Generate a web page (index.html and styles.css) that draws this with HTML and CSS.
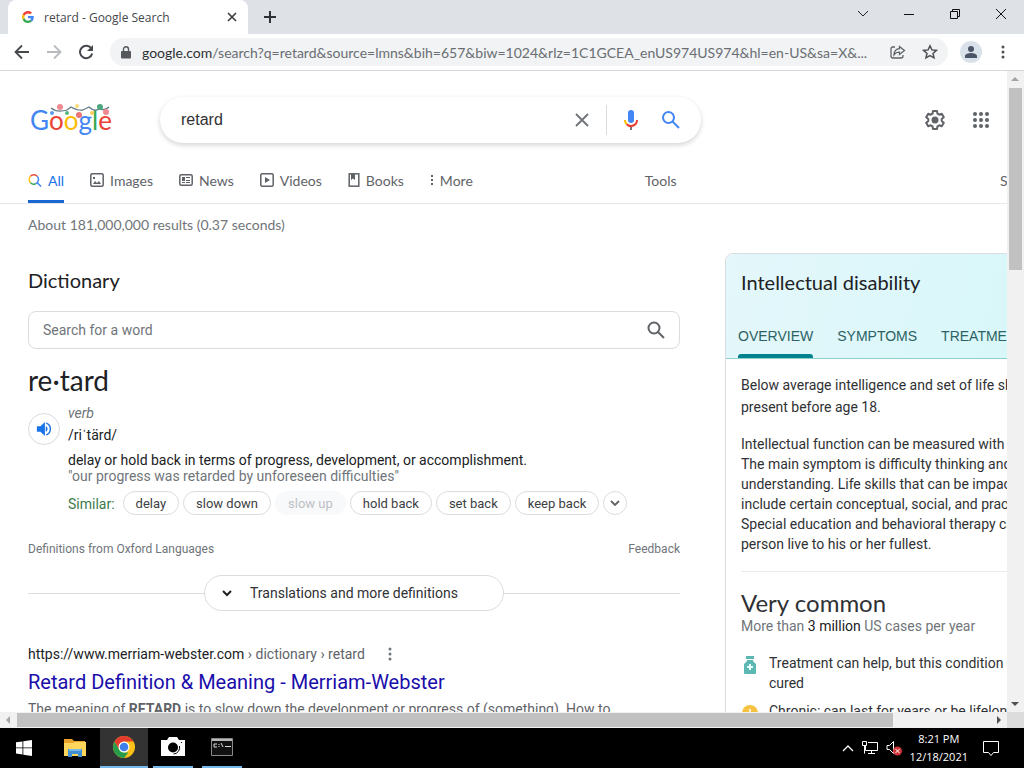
FILE: index.html
```html
<!DOCTYPE html>
<html lang="en">
<head>
    <meta charset="UTF-8">
    <meta name="viewport" content="width=device-width, initial-scale=1.0">
    <title>retard - Google Search</title>
    <link rel="stylesheet" href="styles.css">
</head>
<body>
    <!-- Tab strip -->
    <div class="tab-strip">
        <div class="tab">
            <svg width="12" height="12" viewBox="0 0 48 48"><path fill="#ea4335" d="M24 9.500c3.500 0 6.700 1.200 9.200 3.600l6.900-6.900C35.900 2.400 30.500 0 24 0 14.600 0 6.500 5.400 2.600 13.200l8 6.200C12.400 13.700 17.700 9.500 24 9.500z"/><path fill="#4285f4" d="M47 24.600c0-1.600-.2-3.100-.4-4.600H24v9h12.900c-.6 3-2.200 5.500-4.700 7.200l7.700 6C44.400 38 47 31.800 47 24.600z"/><path fill="#fbbc05" d="M10.500 28.600A14.500 14.500 0 0 1 10.500 19.400l-8-6.200a24 24 0 0 0 0 21.600z"/><path fill="#34a853" d="M24 48c6.500 0 11.900-2.100 15.900-5.800l-7.700-6c-2.200 1.500-4.900 2.300-8.200 2.300-6.300 0-11.600-4.200-13.500-9.900l-8 6.200C6.500 42.600 14.600 48 24 48z"/></svg>
            <span class="tab-title">retard - Google Search</span>
            <button class="icon-button" aria-label="Close tab"><svg width="10" height="10" viewBox="0 0 10 10" fill="none" stroke="#3c4043" stroke-width="1.700"><path d="M1 1l8 8M9 1L1 9"/></svg></button>
        </div>
        <button class="icon-button new-tab" aria-label="New tab"><svg width="12" height="12" viewBox="0 0 12 12" stroke="#303134" stroke-width="2"><path d="M6 0v12M0 6h12"/></svg></button>
        <div class="window-controls">
            <button class="icon-button" aria-label="Search tabs"><svg width="12" height="12" viewBox="0 0 12 12" fill="none" stroke="#222"><path d="M1 3l5 5 5-5"/></svg></button>
            <button class="icon-button" aria-label="Minimize"><svg width="12" height="12" viewBox="0 0 12 12" stroke="#111"><path d="M1 6.500h10"/></svg></button>
            <button class="icon-button" aria-label="Restore"><svg width="12" height="12" viewBox="0 0 12 12" fill="none" stroke="#111"><path d="M1.500 3.500h7v7h-7zM3.500 3.500v-2h7v7h-2"/></svg></button>
            <button class="icon-button" aria-label="Close"><svg width="12" height="12" viewBox="0 0 12 12" stroke="#111"><path d="M1 1l10 10M11 1L1 11"/></svg></button>
        </div>
    </div>

    <!-- Toolbar -->
    <div class="toolbar">
        <button class="icon-button" aria-label="Back"><svg width="16" height="16" viewBox="0 0 16 16" fill="none" stroke="#45484c" stroke-width="1.800"><path d="M15 8H2M8 1.500L1.500 8 8 14.500"/></svg></button>
        <button class="icon-button" aria-label="Forward"><svg width="16" height="16" viewBox="0 0 16 16" fill="none" stroke="#b8babd" stroke-width="1.800"><path d="M1 8h13M8 1.500L14.500 8 8 14.500"/></svg></button>
        <button class="icon-button" aria-label="Reload"><svg width="16" height="16" viewBox="0 0 16 16"><path fill="none" stroke="#45484c" stroke-width="2" d="M13.500 4.800A6.200 6.200 0 1 0 14.200 9.500"/><path fill="#45484c" d="M15 1v6H9z"/></svg></button>
        <div class="address-bar">
            <svg width="10" height="13" viewBox="0 0 10 13"><path fill="#55585d" d="M1 5h8a1 1 0 0 1 1 1v5.500a1 1 0 0 1-1 1H1a1 1 0 0 1-1-1V6a1 1 0 0 1 1-1z"/><path fill="none" stroke="#55585d" stroke-width="1.400" d="M2.500 6V3.200a2.500 2.500 0 0 1 5 0V6"/></svg>
            <span class="url"><span class="domain">google.com</span>/search?q=retard&amp;source=lmns&amp;bih=657&amp;biw=1024&amp;rlz=1C1GCEA_enUS974US974&amp;hl=en-US&amp;sa=X&amp;...</span>
            <button class="icon-button" aria-label="Share"><svg width="16" height="16" viewBox="0 0 16 16" fill="none" stroke="#5f6368" stroke-width="1.300"><path d="M5 3H3a2 2 0 0 0-2 2v7a2 2 0 0 0 2 2h8a2 2 0 0 0 2-2v-1M9.500 2.500L14.500 6.500l-5 4V8.200C7 8 5.500 8.700 4 10.800 4.200 7.500 6 5 9.500 4.700z"/></svg></button>
            <button class="icon-button" aria-label="Bookmark"><svg width="16" height="16" viewBox="0 0 16 16" fill="none" stroke="#4d5156" stroke-width="1.500"><path d="M8 1.800l1.900 4.100 4.500.5-3.400 3 1 4.400L8 11.500l-4 2.300 1-4.400-3.400-3 4.500-.5z"/></svg></button>
        </div>
        <button class="icon-button profile" aria-label="Profile"><svg width="14" height="14" viewBox="0 0 14 14" fill="#4a5568"><circle cx="7" cy="4" r="3"/><path d="M1 13v-2c0-2 3.500-3 6-3s6 1 6 3v2z"/></svg></button>
        <button class="icon-button menu" aria-label="Menu"><svg width="4" height="14" viewBox="0 0 4 14" fill="#4d5156"><circle cx="2" cy="2" r="1.500"/><circle cx="2" cy="7" r="1.500"/><circle cx="2" cy="12" r="1.500"/></svg></button>
    </div>

    <div class="browser-view">
        <div class="page">
            <header class="search-header">
                <a href="#" class="logo" aria-label="Google">
                    <span class="blue">G</span><span class="red">o</span><span class="yellow">o</span><span class="blue">g</span><span class="green">l</span><span class="red">e</span>
                    <svg class="logo-lights" width="60" height="14" viewBox="0 0 60 14"><path fill="none" stroke="#667b86" stroke-width="1.300" d="M1 4q6 5 16 2l4-3q7 4 12 3l6-3q5 5 10 2 6 2 10-2"/><circle cx="2" cy="9" r="2" fill="#5b9bea"/><circle cx="10" cy="3" r="3" fill="#ee8a91"/><circle cx="17" cy="9" r="2" fill="#57b77a"/><circle cx="27" cy="2" r="2" fill="#f8dc78"/><circle cx="29" cy="11" r="3" fill="#eb7474"/><circle cx="42" cy="9" r="2" fill="#f7ce5b"/><circle cx="50" cy="3" r="3" fill="#4aa780"/><circle cx="56" cy="8" r="3" fill="#ed8992"/></svg>
                </a>
                <form class="search-box">
                    <input type="text" value="retard" aria-label="Search">
                    <button type="button" class="icon-button clear" aria-label="Clear"><svg width="14" height="14" viewBox="0 0 14 14" stroke="#70757a" stroke-width="1.900"><path d="M1 1l12 12M13 1L1 13"/></svg></button>
                    <button type="button" class="icon-button mic" aria-label="Search by voice"><svg width="24" height="24" viewBox="0 0 24 24"><path fill="#4285f4" d="M12 15a3 3 0 0 0 3-3V5a3 3 0 0 0-6 0v7a3 3 0 0 0 3 3z"/><path fill="#777" d="M11 18h2v4h-2z"/><path fill="#fbbc04" d="M7 12H5c0 2 .8 3.700 2 5l1.500-1.500C7.500 14.600 7 13.400 7 12z"/><path fill="#ea4335" d="M17 12a5 5 0 0 1-8.500 3.500L7 17a7 7 0 0 0 12-5z"/></svg></button>
                    <button type="button" class="icon-button" aria-label="Google Search"><svg width="20" height="20" viewBox="0 0 20 20" fill="none" stroke="#4285f4" stroke-width="2"><circle cx="7.500" cy="7.500" r="5.500"/><path d="M11.500 11.500l6.500 6.500"/></svg></button>
                </form>
                <div class="header-tools">
                    <button class="icon-button" aria-label="Quick settings"><svg width="24" height="24" viewBox="0 0 24 24"><path fill="none" stroke="#5f6368" stroke-width="2" stroke-linejoin="round" d="M10 3h4l.5 2.700 1.700 1 2.600-1 2 3.500-2.100 1.800v2l2.100 1.800-2 3.500-2.600-1-1.700 1L14 21h-4l-.5-2.700-1.700-1-2.600 1-2-3.500L5.300 13v-2L3.200 9.200l2-3.500 2.600 1 1.700-1z"/><circle cx="12" cy="12" r="3.500" fill="#5f6368"/></svg></button>
                    <button class="icon-button" aria-label="Google apps"><svg width="16" height="16" viewBox="0 0 16 16" fill="#5f6368"><circle cx="2" cy="2" r="2"/><circle cx="8" cy="2" r="2"/><circle cx="14" cy="2" r="2"/><circle cx="2" cy="8" r="2"/><circle cx="8" cy="8" r="2"/><circle cx="14" cy="8" r="2"/><circle cx="2" cy="14" r="2"/><circle cx="8" cy="14" r="2"/><circle cx="14" cy="14" r="2"/></svg></button>
                </div>
            </header>

            <nav class="search-nav">
                <div class="nav-links">
                    <a href="#" class="active"><svg width="14" height="14" viewBox="0 0 15 15" fill="none" stroke-width="1.600"><path stroke="#ea4335" d="M2.700 3.500a5 5 0 0 1 7.200 0"/><path stroke="#fbbc04" d="M2.700 3.500a5 5 0 0 0 0 7"/><path stroke="#34a853" d="M2.700 10.500a5 5 0 0 0 5.500 1"/><path stroke="#4285f4" d="M9.900 3.500a5 5 0 0 1-1.700 8M10 10.500l4 4"/></svg>All</a>
                    <a href="#"><svg width="14" height="14" viewBox="0 0 14 14"><rect x=".8" y=".8" width="12.400" height="12.400" rx="1.500" fill="none" stroke="#5f6368" stroke-width="1.500"/><path fill="#5f6368" d="M3 11l2-3 2 2 2-2 2 3zM3 4h2v2H3z"/></svg>Images</a>
                    <a href="#"><svg width="14" height="14" viewBox="0 0 14 14"><rect x=".8" y="1.800" width="12.400" height="10.400" rx="1.500" fill="none" stroke="#5f6368" stroke-width="1.500"/><path fill="#5f6368" d="M3 4h3v4H3zM7 4h4v1H7zM7 7h4v1H7zM3 9h3v1H3zM7 9h4v1H7z"/></svg>News</a>
                    <a href="#"><svg width="14" height="14" viewBox="0 0 14 14"><rect x=".8" y=".8" width="12.400" height="12.400" rx="1.500" fill="none" stroke="#5f6368" stroke-width="1.500"/><path fill="#5f6368" d="M5 4l5 3-5 3z"/></svg>Videos</a>
                    <a href="#"><svg width="12" height="14" viewBox="0 0 12 14"><rect x="1.200" y=".8" width="9.600" height="12.400" fill="none" stroke="#5f6368" stroke-width="1.500"/><path fill="#5f6368" d="M3 1h4v6L5 5.500 3 7z"/></svg>Books</a>
                    <a href="#" class="more"><svg width="4" height="12" viewBox="0 0 4 12" fill="#5f6368"><path d="M1 1h2v2H1zM1 5h2v2H1zM1 9h2v2H1z"/></svg>More</a>
                    <a href="#" class="tools">Tools</a>
                </div>
                <a href="#">SafeSearch</a>
            </nav>

            <div class="content">
                <main class="results">
                    <p class="stats">About 181,000,000 results (0.37 seconds)</p>
                    <section class="dictionary">
                        <h2>Dictionary</h2>
                        <form class="word-search">
                            <input type="text" placeholder="Search for a word" aria-label="Search for a word">
                            <button type="button" class="icon-button" aria-label="Look up"><svg width="18" height="18" viewBox="0 0 18 18" fill="none" stroke="#5f6368" stroke-width="2"><circle cx="7" cy="7" r="5.500"/><path d="M11 11l6 6"/></svg></button>
                        </form>
                        <h3 class="word">re·tard</h3>
                        <div class="entry">
                            <button class="icon-button speaker" aria-label="Listen"><svg width="16" height="16" viewBox="0 0 18 18"><path fill="#1a73e8" d="M1 6v6h4l5 5V1L5 6z"/><path fill="#1a73e8" d="M11 5.500a4 4 0 0 1 0 7z"/><path fill="none" stroke="#1a73e8" stroke-width="1.600" d="M11.500 2.400a7 7 0 0 1 0 13.200"/></svg></button>
                            <div class="pronunciation">
                                <p class="part">verb</p>
                                <p>/riˈtärd/</p>
                            </div>
                        </div>
                        <div class="definition">
                            <p>delay or hold back in terms of progress, development, or accomplishment.</p>
                            <p class="example">"our progress was retarded by unforeseen difficulties"</p>
                            <div class="similar">
                                <span class="similar-label">Similar:</span>
                                <button class="chip">delay</button>
                                <button class="chip">slow down</button>
                                <button class="chip" disabled>slow up</button>
                                <button class="chip">hold back</button>
                                <button class="chip">set back</button>
                                <button class="chip">keep back</button>
                                <button class="chip round" aria-label="More synonyms"><svg width="10" height="6" viewBox="0 0 10 6" fill="none" stroke="#5f6368" stroke-width="1.800"><path d="M1 1l4 4 4-4"/></svg></button>
                            </div>
                        </div>
                        <div class="source">
                            <a href="#">Definitions from Oxford Languages</a>
                            <a href="#">Feedback</a>
                        </div>
                        <div class="expand">
                            <button><svg width="10" height="7" viewBox="0 0 10 7" fill="none" stroke="#202124" stroke-width="2"><path d="M1 1l4 4 4-4"/></svg>Translations and more definitions</button>
                        </div>
                    </section>
                    <article class="result">
                        <div class="cite"><span><span class="host">https://www.merriam-webster.com</span> › dictionary › retard</span>
                            <button class="icon-button" aria-label="About this result"><svg width="4" height="14" viewBox="0 0 4 14" fill="#70757a"><circle cx="2" cy="2" r="1.500"/><circle cx="2" cy="7" r="1.500"/><circle cx="2" cy="12" r="1.500"/></svg></button>
                        </div>
                        <h3><a href="#">Retard Definition &amp; Meaning - Merriam-Webster</a></h3>
                        <p>The meaning of <b>RETARD</b> is to slow down the development or progress of (something). How to</p>
                    </article>
                </main>

                <aside class="health-panel">
                    <div class="panel-head">
                        <h2>Intellectual disability</h2>
                        <div class="panel-tabs">
                            <a href="#" class="selected">OVERVIEW</a>
                            <a href="#">SYMPTOMS</a>
                            <a href="#">TREATMENTS</a>
                        </div>
                    </div>
                    <div class="panel-body">
                        <p class="summary">Below average intelligence and set of life skills<br>present before age 18.</p>
                        <p class="details">Intellectual function can be measured with a test.<br>The main symptom is difficulty thinking and<br>understanding. Life skills that can be impacted<br>include certain conceptual, social, and practical skills.<br>Special education and behavioral therapy can help a<br>person live to his or her fullest.</p>
                        <h3>Very common</h3>
                        <p class="cases">More than <span>3 million</span> US cases per year</p>
                        <ul>
                            <li><svg width="12" height="18" viewBox="0 0 12 18"><path fill="#5cb8b2" d="M2 0h8v3H2zM3 4h6v1l3 3v9a1 1 0 0 1-1 1H1a1 1 0 0 1-1-1V8l3-3z"/><path fill="#e6fffc" d="M5 8h2v2h2v2H7v2H5v-2H3v-2h2z"/></svg><span>Treatment can help, but this condition can't be<br>cured</span></li>
                            <li><svg width="16" height="18" viewBox="0 0 16 18"><circle cx="8" cy="9" r="8" fill="#f5c242"/><path fill="none" stroke="#fff" stroke-width="1.500" d="M8 5v4l3 2"/></svg><span>Chronic: can last for years or be lifelong</span></li>
                        </ul>
                    </div>
                </aside>
            </div>
        </div>

        <div class="scrollbar vertical">
            <svg width="16" height="16" viewBox="0 0 16 16"><path fill="#a3a3a3" d="M4 10l4-4 4 4z"/></svg>
            <div class="track"><div class="thumb"></div></div>
            <svg width="16" height="16" viewBox="0 0 16 16"><path fill="#505050" d="M4 6l4 4 4-4z"/></svg>
        </div>
        <div class="scrollbar horizontal">
            <svg width="16" height="16" viewBox="0 0 16 16"><path fill="#a3a3a3" d="M10 4L6 8l4 4z"/></svg>
            <div class="track"><div class="thumb"></div></div>
            <svg width="16" height="16" viewBox="0 0 16 16"><path fill="#505050" d="M6 4l4 4-4 4z"/></svg>
        </div>
    </div>

    <!-- Windows taskbar -->
    <footer class="taskbar">
        <button class="task start" aria-label="Start"><svg width="16" height="16" viewBox="0 0 16 16" fill="#fff"><path d="M0 2.300L6.500 1.400v6.100H0zM7.300 1.300L16 0v7.500H7.300zM0 8.300h6.500v6.100L0 13.600zM7.300 8.300H16V16l-8.700-1.300z"/></svg></button>
        <button class="task" aria-label="File Explorer"><svg width="22" height="18" viewBox="0 0 22 18"><path fill="#e7a32e" d="M0 0h8l2 2h11v4H0z"/><path fill="#ffd65c" d="M0 4h9l2-1h11v14H0z"/><path fill="#3f8fd2" d="M4 10h14v8h-4v-3H8v3H4z"/><path fill="#79b9e8" d="M5 10h12v2H5z"/></svg></button>
        <button class="task current" aria-label="Google Chrome"><svg width="24" height="24" viewBox="0 0 24 24"><circle cx="12" cy="12" r="11" fill="#fbc116"/><path fill="#e33b2e" d="M2.500 6.500a11 11 0 0 1 19 0H12l-4.800 8z"/><path fill="#269b4a" d="M2.500 6.500L7.300 14.700 12 17.500h4.300L12 23A11 11 0 0 1 2.500 6.500z"/><circle cx="12" cy="12" r="5.500" fill="#fff"/><circle cx="12" cy="12" r="4.300" fill="#3f7fe8"/></svg></button>
        <button class="task open" aria-label="Camera"><svg width="24" height="20" viewBox="0 0 24 20"><path fill="#fff" d="M0 3h6l2-3h8l2 3h6v16H0z"/><circle cx="12" cy="10.500" r="5" fill="#000"/><path fill="none" stroke="#000" d="M18.500 9a6.500 6.500 0 0 1-6 8"/><path d="M20 5h1v1h-1z"/></svg></button>
        <button class="task open" aria-label="Command Prompt"><svg width="22" height="18" viewBox="0 0 22 18"><path fill="#111" stroke="#8a8a8a" d="M.5.500h21v17H.5z"/><path fill="#b8b8b8" d="M1 1h20v2H1z"/><path fill="none" stroke="#ddd" d="M6 6H3v3h3M8 6v1M8 8v1M10 5l2 4M14 8.500h6"/></svg></button>
        <div class="tray">
            <svg width="12" height="8" viewBox="0 0 12 8" fill="none" stroke="#fff" stroke-width="1.300"><path d="M1 7l5-5 5 5"/></svg>
            <svg width="16" height="14" viewBox="0 0 16 14" fill="none" stroke="#fff"><path d="M6 1.500h9.500v8H3.500V5M9.500 9.500v3M6 12.500h7M.5.500h4v4h-4zM2.500 4.500v8"/></svg>
            <svg width="16" height="16" viewBox="0 0 16 16"><path fill="none" stroke="#fff" d="M1 5.500h2.500L7.500 1.500v12L3.500 9.500H1z"/><circle cx="11.500" cy="11" r="4.500" fill="#d13438"/><path stroke="#fff" d="M9.500 9l4 4M13.500 9l-4 4"/></svg>
            <div class="clock"><span>8:21 PM</span><span>12/18/2021</span></div>
            <svg width="16" height="16" viewBox="0 0 16 16" fill="none" stroke="#fff"><path d="M.5 1.500h15v11h-5L8 15.500l-2.500-3h-5z"/></svg>
        </div>
    </footer>
</body>
</html>
```

FILE: styles.css
```css
* {
    box-sizing: border-box;
}

body {
    display: flex;
    flex-direction: column;
    height: 100vh;
    margin: 0;
    overflow: hidden;
    background: #fff;
    color: #202124;
    font-family: Roboto, Arial, sans-serif;
    font-size: 14px;
}

h2, h3, p, ul {
    margin: 0;
    padding: 0;
    font-weight: 400;
}

a {
    color: inherit;
    text-decoration: none;
}

button, input {
    font-family: inherit;
    font-size: 14px;
}

svg {
    display: block;
    flex-shrink: 0;
}

.icon-button {
    display: flex;
    align-items: center;
    justify-content: center;
    flex-shrink: 0;
    padding: 0;
    border: 0;
    background: none;
}

/* Browser frame */
.tab-strip {
    display: flex;
    flex-shrink: 0;
    height: 34px;
    padding-left: 8px;
    background: #dee1e6;
    font-family: "Open Sans", "Segoe UI", sans-serif;
}

.tab {
    display: flex;
    align-items: center;
    gap: 10px;
    width: 240px;
    padding: 0 11px 0 14px;
    border-radius: 8px 8px 0 0;
    background: #fff;
    color: #45484c;
    font-size: 12px;
}

.tab-title {
    flex: 1;
}

.new-tab {
    width: 44px;
}

.window-controls {
    display: flex;
    margin-left: auto;
    height: 28px;
}

.window-controls .icon-button {
    width: 46px;
}

.toolbar {
    display: flex;
    align-items: center;
    flex-shrink: 0;
    gap: 16px;
    height: 37px;
    padding: 0 16px 0 14px;
    border-bottom: 1px solid #d5d7da;
}

.address-bar {
    display: flex;
    align-items: center;
    flex: 1;
    gap: 16px;
    min-width: 0;
    height: 28px;
    margin-right: -4px;
    padding: 0 10px 0 11px;
    border-radius: 14px;
    background: #f1f3f4;
}

.address-bar > svg {
    margin-right: -5px;
}

.url {
    flex: 1;
    overflow: hidden;
    color: #6a6e73;
    font-family: Lato, "Segoe UI", sans-serif;
    font-size: 14px;
    white-space: nowrap;
}

.domain {
    color: #303134;
}

.profile {
    width: 22px;
    height: 22px;
    border-radius: 50%;
    background: #d9e1eb;
}

.menu {
    width: 10px;
}

.browser-view {
    display: grid;
    grid-template-columns: minmax(0, 1fr) 17px;
    grid-template-rows: minmax(0, 1fr) 16px;
    flex: 1;
    min-height: 0;
    background: #dcdcdc;
}

.page {
    overflow: hidden;
    background: #fff;
}

/* Search header */
.search-header {
    display: flex;
    align-items: center;
    height: 86px;
    padding: 12px 18px 0 30px;
}

.logo {
    position: relative;
    display: flex;
    width: 130px;
    font-family: Lato, sans-serif;
    font-size: 26px;
    line-height: 40px;
}

.logo-lights {
    position: absolute;
    top: 4px;
    left: 20px;
}

.blue {
    color: #4285f4;
}

.red {
    color: #ea4335;
}

.yellow {
    color: #fbbc05;
}

.green {
    color: #34a853;
}

.search-box {
    display: flex;
    align-items: center;
    width: 541px;
    height: 46px;
    padding: 0 20px 0 21px;
    border-radius: 23px;
    box-shadow: 0 2px 5px rgba(32, 33, 36, 0.2);
}

.search-box input {
    flex: 1;
    min-width: 0;
    padding: 0;
    border: 0;
    outline: 0;
    background: none;
    color: #303134;
    font-family: "Liberation Sans", Arial, sans-serif;
    font-size: 16px;
}

.clear {
    width: 50px;
    height: 30px;
    border-right: 1px solid #dadce0;
}

.mic {
    width: 24px;
    margin: 0 18px 0 12px;
}

.header-tools {
    display: flex;
    align-items: center;
    gap: 26px;
    margin-left: auto;
}

.search-nav {
    display: flex;
    min-width: 1100px;
    height: 47px;
    padding-left: 28px;
    border-bottom: 1px solid #e4e6e9;
    color: #5f6368;
    font-family: Lato, sans-serif;
    font-size: 14px;
}

.nav-links {
    display: flex;
    width: 972px;
    gap: 26px;
}

.search-nav a {
    display: flex;
    align-items: center;
    gap: 6px;
}

.search-nav .active {
    box-shadow: inset 0 -3px #1967d2;
    color: #1a73e8;
}

.search-nav .tools {
    margin-left: 146px;
}

.content {
    display: flex;
    align-items: flex-start;
    gap: 45px;
    min-width: 1125px;
    padding: 0 28px;
}

.results {
    width: 652px;
}

.stats {
    padding-top: 10px;
    color: #70757a;
    font-family: Lato, sans-serif;
    font-size: 14px;
    line-height: 22px;
}

/* Dictionary */
.dictionary h2 {
    margin-top: 30px;
    font-family: Lato, sans-serif;
    font-size: 20px;
    line-height: 28px;
}

.word-search {
    display: flex;
    height: 38px;
    margin-top: 17px;
    padding: 0 14px;
    border: 1px solid #dadce0;
    border-radius: 8px;
}

.word-search input {
    flex: 1;
    padding: 0;
    border: 0;
    outline: 0;
    background: none;
}

.word-search input::placeholder {
    color: #70757a;
}

.word {
    margin-top: 13px;
    font-family: Lato, sans-serif;
    font-size: 28px;
    line-height: 36px;
}

.entry {
    display: flex;
    align-items: center;
    gap: 8px;
    padding-top: 4px;
}

.pronunciation {
    line-height: 22px;
}

.part {
    color: #70757a;
    font-style: italic;
}

.speaker {
    width: 32px;
    height: 32px;
    margin-top: 10px;
    border: 1px solid #dadce0;
    border-radius: 50%;
}

.definition {
    padding: 6px 0 0 40px;
    line-height: 16px;
}

.example, .source {
    color: #70757a;
}

.similar {
    display: flex;
    gap: 4px;
    margin-top: 7px;
}

.similar-label {
    margin-right: 4px;
    color: #3c7a4c;
    line-height: 26px;
}

.chip {
    height: 24px;
    padding: 0 12px;
    border: 1px solid #dadce0;
    border-radius: 12px;
    background: #fff;
    color: #3c4043;
    font-size: 13px;
}

.chip:disabled {
    border-color: #f8f9fa;
    background: #f8f9fa;
    color: #bdc1c6;
}

.chip.round {
    width: 24px;
    padding: 0 6px;
}

.source {
    display: flex;
    justify-content: space-between;
    margin-top: 24px;
    font-size: 12px;
    line-height: 16px;
}

.expand {
    display: flex;
    align-items: center;
    margin-top: 18px;
}

.expand::before, .expand::after {
    flex: 1;
    border-top: 1px solid #dadce0;
    content: "";
}

.expand button {
    display: flex;
    align-items: center;
    gap: 18px;
    width: 300px;
    height: 36px;
    padding: 0 17px;
    border: 1px solid #dadce0;
    border-radius: 18px;
    background: #fff;
    color: #303134;
}

/* Web result */
.result {
    margin-top: 32px;
    color: #5f6368;
}

.cite {
    display: flex;
    gap: 23px;
    line-height: 22px;
}

.host {
    color: #202124;
}

.result h3 {
    font-size: 20px;
    line-height: 34px;
}

.result h3 a {
    color: #1a0dab;
}

.result p {
    line-height: 20px;
    white-space: nowrap;
}

/* Knowledge panel */
.health-panel {
    flex: 1;
    margin-top: 49px;
    border: 1px solid #dadce0;
    border-radius: 8px;
    overflow: hidden;
    white-space: nowrap;
}

.panel-head {
    padding: 10px 12px 0;
    border-bottom: 1px solid #8fcfce;
    background: linear-gradient(100deg, #e4f7fb, #d5f7f8);
}

.panel-head h2 {
    padding-left: 3px;
    font-family: Lato, sans-serif;
    font-size: 20px;
    line-height: 36px;
}

.panel-tabs {
    display: flex;
    gap: 24px;
    margin-top: 14px;
    color: #2c6264;
    font-family: "Liberation Sans", Arial, sans-serif;
    line-height: 44px;
}

.panel-tabs a {
    position: relative;
}

.panel-tabs .selected::after {
    position: absolute;
    right: 0;
    bottom: 0;
    left: 0;
    height: 4px;
    border-radius: 3px 3px 0 0;
    background: #00838f;
    content: "";
}

.panel-body {
    padding: 15px;
    color: #303134;
    line-height: 20px;
}

.summary {
    line-height: 22px;
}

.details {
    margin-top: 16px;
    padding-bottom: 17px;
    border-bottom: 1px solid #e8eaed;
}

.panel-body h3 {
    margin-top: 18px;
    font-family: Lato, sans-serif;
    font-size: 24px;
    line-height: 26px;
}

.cases {
    color: #70757a;
}

.cases span {
    color: #202124;
}

.panel-body ul {
    list-style: none;
}

.panel-body li {
    display: flex;
    gap: 10px;
    margin-top: 8px;
}

.panel-body li:first-child {
    margin-top: 17px;
}

.panel-body li svg {
    width: 18px;
    margin-top: 3px;
}

/* Scrollbars */
.scrollbar {
    display: flex;
    background: #f1f1f1;
}

.track {
    flex: 1;
    padding: 1px 2px;
}

.thumb {
    width: 100%;
    height: 100%;
    background: #c1c1c1;
}

.vertical {
    flex-direction: column;
}

.vertical .thumb {
    height: 30%;
}

.horizontal .track {
    padding: 1px;
}

.horizontal .thumb {
    width: 90%;
}

/* Taskbar */
.taskbar {
    display: flex;
    flex-shrink: 0;
    height: 40px;
    background: #000;
    color: #fff;
    font-family: "Open Sans", "Segoe UI", sans-serif;
}

.task {
    display: flex;
    align-items: center;
    justify-content: center;
    width: 48px;
    margin-right: 1px;
    padding: 0;
    border: 0;
    background: none;
}

.task.start {
    margin-right: 3px;
}

.task.open {
    width: 40px;
    margin: 0 5px 0 4px;
}

.task.open, .task.current {
    border-bottom: 2px solid #76b9ed;
}

.task.current {
    background: #333;
}

.tray {
    display: flex;
    align-items: center;
    gap: 8px;
    margin-left: auto;
    padding-right: 25px;
}

.clock {
    display: flex;
    flex-direction: column;
    align-items: center;
    margin-right: 7px;
    font-size: 11px;
    line-height: 18px;
}
```
